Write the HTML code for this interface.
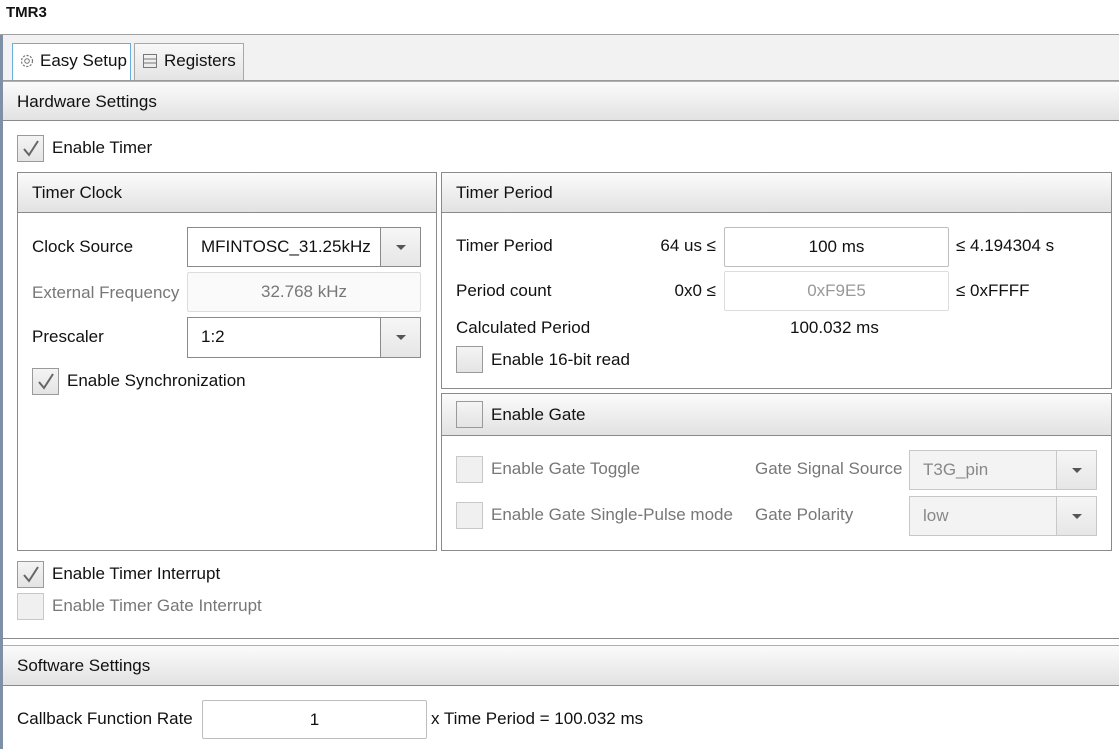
<!DOCTYPE html>
<html><head><style>
*{box-sizing:border-box;margin:0;padding:0}
body{width:1119px;height:749px;overflow:hidden;background:#fff;font-family:"Liberation Sans",sans-serif;font-size:17px;color:#111;position:relative}
.a{position:absolute;white-space:nowrap}
.hdr{position:absolute;background:linear-gradient(#fbfbfb,#e2e2e2);border-bottom:1px solid #8a8a8a;border-top:1px solid #b0b0b0}
.panel{position:absolute;border:1px solid #8a8a8a;background:#fff}
.cb{position:absolute;width:27px;height:27px;border:1px solid #9a9a9a;background:linear-gradient(#f4f4f4,#e4e4e4)}
.cb.dis{border-color:#c8c8c8;background:#f0f0f0}
.cb svg{position:absolute;left:3px;top:3px}
.inp{position:absolute;border:1px solid #bdbdbd;background:#fff;text-align:center;line-height:38px;border-radius:2px}
.dd{position:absolute;border:1px solid #8a8a8a;background:#fff;line-height:38px;padding-left:13px}
.dd .ar{position:absolute;right:0;top:0;bottom:0;width:40px;border-left:1px solid #8a8a8a;background:linear-gradient(#f6f6f6,#e6e6e6)}
.dd .ar:after{content:"";position:absolute;left:15px;top:17px;border-left:5px solid transparent;border-right:5px solid transparent;border-top:5px solid #555}
.dd.dis{border-color:#c8c8c8;color:#888;background:#f3f3f3}
.dd.dis .ar{border-left-color:#c8c8c8}
.g{color:#777}
</style></head><body>
<div class="a" style="left:6px;top:4px;font-weight:bold;font-size:15px">TMR3</div>
<div class="a" style="left:0;top:34px;width:1119px;height:1px;background:#a0a0a0"></div>
<div class="a" style="left:0;top:35px;width:3px;height:714px;background:#7f8fa6"></div>
<div class="a" style="left:3px;top:35px;width:1116px;height:45px;background:#f2f2f2"></div>
<div class="a" style="left:12px;top:43px;width:119px;height:38px;border:1px solid #6aaee0;border-bottom:none;background:#fff;padding:7px 0 0 27px">Easy Setup</div>
<svg class="a" style="left:19px;top:53px" width="16" height="16" viewBox="0 0 16 16"><circle cx="8" cy="8" r="5.5" fill="none" stroke="#777" stroke-width="1.2" stroke-dasharray="2.2 1.4"/><circle cx="8" cy="8" r="2.3" fill="none" stroke="#777"/></svg>
<div class="a" style="left:134px;top:43px;width:110px;height:37px;border:1px solid #a8a8a8;border-bottom:none;background:linear-gradient(#f8f8f8,#e4e4e4);padding:7px 0 0 29px">Registers</div>
<svg class="a" style="left:143px;top:54px" width="14" height="14"><rect x="0.5" y="0.5" width="13" height="13" fill="none" stroke="#777"/><path d="M1 5h12M1 9h12" stroke="#777"/></svg>
<div class="a" style="left:3px;top:80px;width:1116px;height:1px;background:#9a9a9a"></div>

<div class="hdr" style="left:3px;top:81px;width:1116px;height:40px"><span class="a" style="left:14px;top:10px">Hardware Settings</span></div>

<div class="cb" style="left:17px;top:135px"><svg width="20" height="20"><path d="M3 10l5 6 9-14" fill="none" stroke="#666" stroke-width="2"/></svg></div>
<div class="a" style="left:52px;top:138px">Enable Timer</div>

<div class="panel" style="left:17px;top:172px;width:420px;height:379px">
<div class="hdr" style="left:0;top:0;width:418px;height:40px;border-top:none"><span class="a" style="left:14px;top:10px">Timer Clock</span></div>
</div>
<div class="a" style="left:32px;top:237px">Clock Source</div>
<div class="dd" style="left:187px;top:227px;width:234px;height:40px">MFINTOSC_31.25kHz<div class="ar"></div></div>
<div class="a g" style="left:32px;top:283px">External Frequency</div>
<div class="inp g" style="left:187px;top:272px;width:234px;height:40px;background:#fafafa;border-color:#ddd">32.768 kHz</div>
<div class="a" style="left:32px;top:327px">Prescaler</div>
<div class="dd" style="left:187px;top:317px;width:234px;height:41px">1:2<div class="ar"></div></div>
<div class="cb" style="left:32px;top:368px"><svg width="20" height="20"><path d="M3 10l5 6 9-14" fill="none" stroke="#666" stroke-width="2"/></svg></div>
<div class="a" style="left:67px;top:371px">Enable Synchronization</div>

<div class="panel" style="left:441px;top:172px;width:671px;height:217px">
<div class="hdr" style="left:0;top:0;width:669px;height:40px;border-top:none"><span class="a" style="left:14px;top:10px">Timer Period</span></div>
</div>
<div class="a" style="left:456px;top:236px">Timer Period</div>
<div class="a" style="left:600px;top:236px;width:116px;text-align:right">64 us ≤</div>
<div class="inp" style="left:724px;top:227px;width:225px;height:40px">100 ms</div>
<div class="a" style="left:956px;top:236px">≤ 4.194304 s</div>
<div class="a" style="left:456px;top:281px">Period count</div>
<div class="a" style="left:600px;top:281px;width:116px;text-align:right">0x0 ≤</div>
<div class="inp g" style="left:724px;top:271px;width:225px;height:40px;border-color:#ddd;color:#999">0xF9E5</div>
<div class="a" style="left:956px;top:281px">≤ 0xFFFF</div>
<div class="a" style="left:456px;top:318px">Calculated Period</div>
<div class="a" style="left:790px;top:318px">100.032 ms</div>
<div class="cb" style="left:456px;top:346px"></div>
<div class="a" style="left:491px;top:350px">Enable 16-bit read</div>

<div class="panel" style="left:441px;top:393px;width:671px;height:158px">
<div class="hdr" style="left:0;top:0;width:669px;height:42px;border-top:none"><span class="a" style="left:49px;top:11px">Enable Gate</span></div>
</div>
<div class="cb" style="left:456px;top:401px"></div>
<div class="cb dis" style="left:456px;top:456px"></div>
<div class="a g" style="left:491px;top:459px">Enable Gate Toggle</div>
<div class="a g" style="left:755px;top:459px">Gate Signal Source</div>
<div class="dd dis" style="left:909px;top:450px;width:188px;height:40px">T3G_pin<div class="ar"></div></div>
<div class="cb dis" style="left:456px;top:502px"></div>
<div class="a g" style="left:491px;top:505px">Enable Gate Single-Pulse mode</div>
<div class="a g" style="left:755px;top:505px">Gate Polarity</div>
<div class="dd dis" style="left:909px;top:496px;width:188px;height:40px">low<div class="ar"></div></div>

<div class="cb" style="left:17px;top:561px"><svg width="20" height="20"><path d="M3 10l5 6 9-14" fill="none" stroke="#666" stroke-width="2"/></svg></div>
<div class="a" style="left:52px;top:564px">Enable Timer Interrupt</div>
<div class="cb dis" style="left:17px;top:593px"></div>
<div class="a g" style="left:52px;top:596px">Enable Timer Gate Interrupt</div>

<div class="a" style="left:3px;top:638px;width:1116px;height:1px;background:#8a8a8a"></div>
<div class="a" style="left:3px;top:639px;width:1116px;height:7px;background:#fff"></div>
<div class="hdr" style="left:3px;top:645px;width:1116px;height:41px"><span class="a" style="left:14px;top:10px">Software Settings</span></div>
<div class="a" style="left:17px;top:709px">Callback Function Rate</div>
<div class="inp" style="left:202px;top:700px;width:225px;height:39px">1</div>
<div class="a" style="left:431px;top:709px">x Time Period = 100.032 ms</div>
</body></html>
